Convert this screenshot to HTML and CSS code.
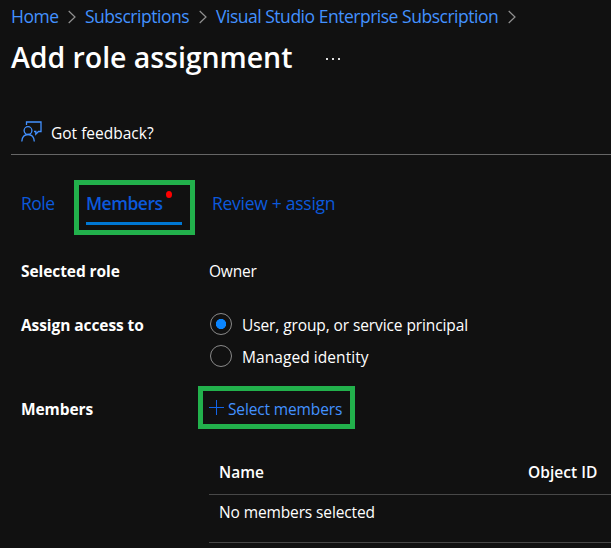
FILE: index.html
```html
<!DOCTYPE html>
<html lang="en">
<head>
<meta charset="utf-8">
<title>Add role assignment</title>
<link rel="stylesheet" href="styles.css">
</head>
<body>
<nav class="crumbs">
  <a class="c1">Home</a>
  <svg class="chev" viewBox="0 0 8 14"><path d="M.7 1 7 7 .7 13"/></svg>
  <a class="c2">Subscriptions</a>
  <svg class="chev" viewBox="0 0 8 14"><path d="M.7 1 7 7 .7 13"/></svg>
  <a class="c3">Visual Studio Enterprise Subscription</a>
  <svg class="chev" viewBox="0 0 8 14"><path d="M.7 1 7 7 .7 13"/></svg>
</nav>
<header class="title-row">
  <h1><span>Add role assignment</span></h1>
  <svg class="more" viewBox="0 0 14 2"><path d="M0 0h2v2H0zM6 0h2v2H6zM12 0h2v2h-2z"/></svg>
</header>
<div class="toolbar">
  <svg class="feedback-icon" viewBox="0 0 21 21"><path d="M5.500 4V1h14.500v9.500h-2.500l-2.700 2.700v-2.700h-1.800"/><circle cx="7" cy="9.600" r="3.900"/><path d="M.8 20.500c.3-4.300 2.600-7 6.200-7s6 2.700 6.300 7"/></svg>
  <span class="fb">Got feedback?</span>
</div>
<div class="tabs">
  <a class="tab role"><span>Role</span></a>
  <a class="tab active"><span class="tab-label">Members</span><i class="dot"></i></a>
  <a class="tab review"><span>Review + assign</span></a>
</div>
<main class="form">
  <div class="label l1"><span>Selected role</span></div>
  <div class="value owner"><span>Owner</span></div>
  <div class="label l2"><span>Assign access to</span></div>
  <div class="radios">
    <div class="radio"><i class="ring on"></i><span class="r1">User, group, or service principal</span></div>
    <div class="radio"><i class="ring"></i><span class="r2">Managed identity</span></div>
  </div>
  <div class="label l3"><span>Members</span></div>
  <a class="select"><svg class="plus" viewBox="0 0 15 15"><path d="M7.500 0v15M0 7.500h15"/></svg><span>Select members</span></a>
</main>
<div class="table">
  <div class="row head"><span class="n">Name</span><span class="o">Object ID</span></div>
  <div class="row"><span class="e">No members selected</span></div>
</div>
</body>
</html>
```
FILE: styles.css
```css
* { box-sizing: border-box; }
body {
  margin: 0;
  width: 611px;
  height: 548px;
  overflow: hidden;
  background: #111;
  color: #fff;
  font: 15.500px/20px "Open Sans", "Noto Sans", sans-serif;
}
span, a { white-space: nowrap; }
.crumbs {
  display: flex;
  align-items: center;
  padding: 4px 0 0 11px;
  height: 28px;
  font-size: 17.500px;
  line-height: 24px;
  letter-spacing: -0.48px;
  color: #4391ff;
}
.crumbs a { flex: none; }
.c1 { width: 57px; }
.c2 { width: 105px; }
.c3 { width: 284px; }
.chev { width: 8px; height: 14px; flex: none; margin-top: 2px; }
.c1 + .chev { margin-right: 9px; }
.c2 + .chev { margin: 2px 9px 0 9px; }
.c3 + .chev { margin-left: 8px; }
.chev path { fill: none; stroke: #919191; stroke-width: 1.2; }
.title-row { display: flex; align-items: center; height: 40px; margin: 9px 0 0 11px; }
h1 { margin: 0; width: 315px; font-size: 28.500px; line-height: 40px; font-weight: 650; letter-spacing: -0.05px; }
.more { width: 14px; height: 2px; margin-top: 4px; fill: #ddd; }
.toolbar {
  display: flex;
  height: 78px;
  margin-left: 11px;
  padding: 46px 0 0 10px;
  border-bottom: 1px solid #666;
}
.feedback-icon { width: 21px; height: 21px; margin: -2px 9px 0 0; fill: none; stroke: #4391ff; stroke-width: 1.3; }
.tabs {
  display: flex;
  height: 55px;
  margin: 25px 0 0 21px;
  font-size: 17.500px;
  line-height: 24px;
  letter-spacing: -0.27px;
  color: #0c59db;
}
.tab { padding-top: 11px; }
.role { width: 53px; letter-spacing: -0.5px; }
.active {
  display: flex;
  width: 121px;
  padding: 6px 8px 0 7px;
  border: 5px solid #22b14c;
  font-weight: 600;
  letter-spacing: -0.5px;
}
.tab-label { flex: none; width: 96px; height: 34px; border-bottom: 3px solid #0078d4; }
.dot { flex: none; width: 6px; height: 7px; margin: 0 0 0 -16px; border-radius: 50%; background: #f00; }
.review { margin-left: 17px; }
.form {
  display: grid;
  grid-template-columns: 177px 400px;
  grid-template-rows: 54px 71px 43px;
  padding: 26px 0 0 21px;
}
.label { font-weight: 700; letter-spacing: -0.08px; }
.value { padding-left: 11px; letter-spacing: -0.2px; }
.radios { padding-left: 12px; }
.r1 { letter-spacing: -0.1px; }
.r2 { letter-spacing: 0.06px; }
.radio { display: flex; height: 32px; }
.ring { width: 22px; height: 22px; margin: -2px 10px 0 0; border: 1px solid #8a8a8a; border-radius: 50%; }
.on { background: radial-gradient(circle, #0a85ff 4.800px, transparent 5.400px); }
.label.l3 { padding-top: 13px; }
.select {
  display: flex;
  width: 157px;
  height: 43px;
  padding: 8px 0 0 6px;
  border: 5px solid #22b14c;
  color: #4391ff;
  letter-spacing: -0.14px;
}
.plus { width: 15px; height: 15px; margin: 1px 4px 0 0; stroke: #1264e8; stroke-width: 1; }
.table { margin: 23px 0 0 209px; }
.row { display: flex; height: 48px; padding: 7px 0 0 10px; border-bottom: 1px solid #484848; letter-spacing: -0.12px; }
.row.head { height: 43px; padding-top: 10px; font-weight: 600; letter-spacing: 0.05px; }
.n { width: 309px; }
```
